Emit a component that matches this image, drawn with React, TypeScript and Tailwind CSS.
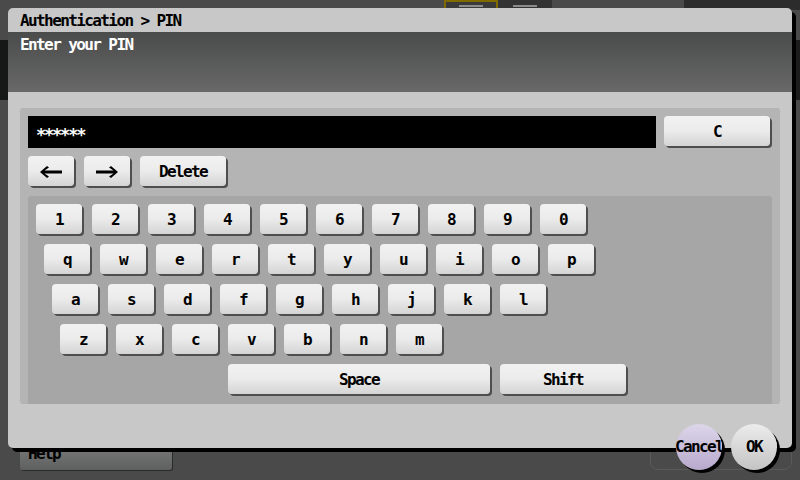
import React from 'react'

const font = { fontFamily: '"DejaVu Sans Mono", "Liberation Mono", monospace' }

const label = 'text-[16px] tracking-[-1.6px] leading-none font-bold'

const keyBase =
  'flex items-center justify-center pt-[2px] rounded-[4px] bg-gradient-to-b from-[#f2f2f2] via-[#ebebeb] to-[#d4d4d4] shadow-[2px_2px_0_#4e4e4e] text-black'

function Key({ text, w = 'w-[46px]', children }: { text?: string; w?: string; children?: React.ReactNode }) {
  return <div className={`${keyBase} ${label} ${w} h-[30px] shrink-0`}>{children ?? text}</div>
}

function Arrow({ dir }: { dir: 'left' | 'right' }) {
  return (
    <svg width="22" height="12" viewBox="0 0 22 12" className={dir === 'right' ? 'rotate-180' : ''}>
      <polygon points="0,6 7,0 9,1.5 4.5,4.6 22,4.6 22,7.4 4.5,7.4 9,10.5 7,12" fill="#000" />
    </svg>
  )
}

const rows = [
  { pad: 'pl-[8px]', keys: ['1', '2', '3', '4', '5', '6', '7', '8', '9', '0'] },
  { pad: 'pl-[16px]', keys: ['q', 'w', 'e', 'r', 't', 'y', 'u', 'i', 'o', 'p'] },
  { pad: 'pl-[24px]', keys: ['a', 's', 'd', 'f', 'g', 'h', 'j', 'k', 'l'] },
  { pad: 'pl-[32px]', keys: ['z', 'x', 'c', 'v', 'b', 'n', 'm'] },
]

export default function App() {
  return (
    <div className="relative w-[800px] h-[480px] overflow-hidden bg-[#4a4a4a]" style={font}>
      {/* background screen behind the dialog */}
      <div className="absolute left-[444px] top-0 w-[54px] h-[10px] border-2 border-[#7e6a00] bg-[#3a3a3a] flex justify-center pt-[3px]">
        <div className="w-[24px] h-[2px] bg-[#8c8c8c]" />
      </div>
      <div className="absolute left-[498px] top-0 w-[54px] h-[10px] bg-[#333333] flex justify-center pt-[5px]">
        <div className="w-[24px] h-[2px] bg-[#8c8c8c]" />
      </div>
      <div className="absolute left-[684px] top-0 w-[116px] h-[10px] bg-[#2c2c2c]" />
      <div className="absolute left-0 top-[40px] w-[8px] h-[60px] bg-[#161717]" />
      <div className="absolute left-[796px] top-[40px] w-[4px] h-[60px] bg-[#1c1c1c]" />
      <div className={`absolute left-[20px] top-[430px] w-[152px] h-[40px] rounded-[3px] bg-gradient-to-b from-[#8a8a8a] to-[#5e605f] shadow-[1px_1px_0_#2a2a2a] pt-[16px] pl-[8px] text-black ${label}`}>
        Help
      </div>
      <div className="absolute left-[650px] top-[430px] w-[142px] h-[40px] rounded-[8px] border border-[#5a5a5a]" />

      {/* dialog */}
      <div className="absolute left-[8px] top-[8px] w-[784px] h-[440px] rounded-[5px] bg-[#c8c8c8] shadow-[4px_4px_0_#000] flex flex-col overflow-hidden">
        <div className={`h-[24px] pl-[12px] pt-[2px] flex items-center text-black ${label}`}>
          Authentication &gt; PIN
        </div>
        <div className={`h-[60px] bg-gradient-to-b from-[#4a4c4b] to-[#686868] pl-[12px] pt-[5px] text-white ${label}`}>
          Enter your PIN
        </div>

        <div className="pt-[16px] px-[12px]">
          <div className="h-[296px] rounded-[3px] bg-[#b4b4b4] pt-[8px] px-[8px] flex flex-col">
            {/* input row */}
            <div className="flex gap-[8px] h-[32px]">
              <div className="w-[628px] h-[32px] bg-black flex items-center pl-[8px] pt-[6px] text-white text-[17px] font-bold tracking-[-2.2px] leading-none">
                ******
              </div>
              <Key text="C" w="w-[106px]" />
            </div>

            {/* cursor / delete row */}
            <div className="flex gap-[10px] mt-[8px]">
              <Key>
                <Arrow dir="left" />
              </Key>
              <Key>
                <Arrow dir="right" />
              </Key>
              <Key text="Delete" w="w-[86px]" />
            </div>

            {/* keyboard */}
            <div className="mt-[10px] flex-1 rounded-t-[3px] bg-[#a6a6a6] pt-[8px] flex flex-col gap-[10px]">
              {rows.map((r, i) => (
                <div key={i} className={`flex gap-[10px] ${r.pad}`}>
                  {r.keys.map((k) => (
                    <Key key={k} text={k} />
                  ))}
                </div>
              ))}
              <div className="flex gap-[10px] pl-[200px]">
                <Key text="Space" w="w-[262px]" />
                <Key text="Shift" w="w-[126px]" />
              </div>
            </div>
          </div>
        </div>
      </div>

      {/* round action buttons */}
      <div className={`absolute left-[676px] top-[424px] w-[46px] h-[46px] rounded-full bg-gradient-to-b from-[#ddd6ea] to-[#b7a9cc] shadow-[3px_3px_0_#000] flex items-center justify-center text-black ${label}`}>
        Cancel
      </div>
      <div className={`absolute left-[731px] top-[424px] w-[46px] h-[46px] rounded-full bg-gradient-to-b from-[#ececec] to-[#c4c4c4] shadow-[3px_3px_0_#000] flex items-center justify-center text-black ${label}`}>
        OK
      </div>
    </div>
  )
}
